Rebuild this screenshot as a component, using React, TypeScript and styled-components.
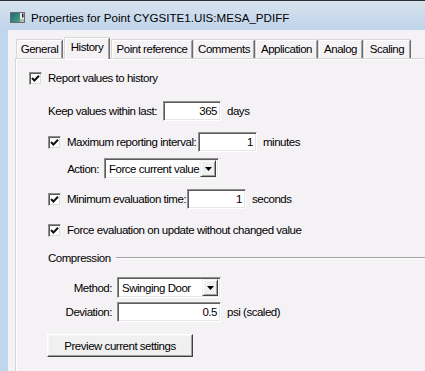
import React from "react";
import styled, { createGlobalStyle } from "styled-components";

const UI = `"Liberation Sans", Arial, sans-serif`;

const Global = createGlobalStyle`
  html, body { margin: 0; padding: 0; background: #f5f2f5; }
  body { width: 425px; height: 371px; overflow: hidden; }
  * { box-sizing: border-box; }
`;

const Window = styled.div`
  width: 425px;
  height: 371px;
  display: flex;
  flex-direction: column;
  background: #f5f2f5;
  border-top: 1px solid #2b3038;
  overflow: hidden;
  font-family: ${UI};
  font-size: 11.5px;
  letter-spacing: -0.47px;
  color: #000;
`;

const TitleBar = styled.div`
  height: 29px;
  flex: none;
  display: flex;
  align-items: center;
  gap: 6px;
  padding: 3px 0 0 10px;
  background: linear-gradient(#d8e2ed, #bfd4eb);
`;

const TitleText = styled.span`
  font-family: "Liberation Sans", Arial, sans-serif;
  font-size: 11.6px;
  letter-spacing: 0;
  color: #000;
  white-space: nowrap;
`;

const Body = styled.div`
  flex: 1;
  display: flex;
  min-height: 0;
`;

const Frame = styled.div`
  width: 8px;
  flex: none;
  background: #bfd6ef;
`;

const Client = styled.div`
  flex: 1;
  display: flex;
  flex-direction: column;
  padding: 7px 0 0 7px;
  min-width: 0;
`;

const TabRow = styled.div`
  height: 21px;
  display: flex;
  align-items: flex-end;
  padding-left: 1px;
  position: relative;
  z-index: 1;
`;

const Tab = styled.div<{ $w: number; $active?: boolean }>`
  width: ${(p) => p.$w}px;
  height: ${(p) => (p.$active ? 22 : 19)}px;
  margin: ${(p) => (p.$active ? "0 1px -1px 1px" : "0")};
  display: flex;
  align-items: center;
  justify-content: center;
  padding-bottom: ${(p) => (p.$active ? 3 : 1)}px;
  background: #f5f2f5;
  border-top: 1px solid #d6d6d6;
  border-left: 1px solid #d6d6d6;
  border-right: 1px solid #6d6d6d;
  border-top-left-radius: 2px;
  border-top-right-radius: 2px;
  box-shadow: inset 1px 1px 0 #ffffff, inset -1px 0 0 #a3a3a3;
  white-space: nowrap;
`;

const Panel = styled.div`
  flex: 1;
  background: #f5f2f5;
  border-top: 1px solid #d6d6d6;
  border-left: 1px solid #d6d6d6;
  box-shadow: inset 1px 1px 0 #ffffff;
  padding-left: 13px;
  display: flex;
  flex-direction: column;
`;

const Row = styled.div<{ $mt: number; $indent?: number }>`
  display: flex;
  align-items: center;
  min-height: 20px;
  margin-top: ${(p) => p.$mt}px;
  padding-left: ${(p) => p.$indent ?? 0}px;
  white-space: nowrap;
`;

const Box = styled.span`
  width: 13px;
  height: 13px;
  flex: none;
  display: inline-flex;
  align-items: center;
  justify-content: center;
  background: #fff;
  border: 1px solid;
  border-color: #8d8d8d #f4f4f4 #f4f4f4 #8d8d8d;
  box-shadow: inset 1px 1px 0 #5a5a5a, inset -1px -1px 0 #dcdcdc;
  margin-right: 6px;
`;

const Label = styled.span<{ $w?: number; $right?: boolean }>`
  display: inline-block;
  width: ${(p) => (p.$w ? `${p.$w}px` : "auto")};
  flex: none;
  text-align: ${(p) => (p.$right ? "right" : "left")};
  padding-right: ${(p) => (p.$right ? 5 : 0)}px;
`;

const Field = styled.div<{ $w: number }>`
  width: ${(p) => p.$w}px;
  height: 20px;
  flex: none;
  display: flex;
  align-items: center;
  justify-content: flex-end;
  padding-right: 3px;
  background: #fff;
  border: 1px solid;
  border-color: #8f8f8f #ffffff #ffffff #8f8f8f;
  box-shadow: inset 1px 1px 0 #5a5a5a, inset -1px -1px 0 #e6e6e6;
`;

const Unit = styled.span`
  margin-left: 6px;
`;

const Combo = styled.div<{ $w: number }>`
  width: ${(p) => p.$w}px;
  height: 21px;
  flex: none;
  display: flex;
  align-items: center;
  padding: 2px;
  background: #fff;
  border: 1px solid;
  border-color: #8f8f8f #ffffff #ffffff #8f8f8f;
  box-shadow: inset 1px 1px 0 #5a5a5a, inset -1px -1px 0 #e6e6e6;
`;

const ComboText = styled.span`
  flex: 1;
  padding-left: 2px;
  overflow: hidden;
`;

const ComboButton = styled.span`
  width: 16px;
  height: 17px;
  flex: none;
  display: flex;
  align-items: center;
  justify-content: center;
  background: #f0f0f0;
  border: 1px solid;
  border-color: #f0f0f0 #404040 #404040 #f0f0f0;
  box-shadow: inset 1px 1px 0 #ffffff, inset -1px -1px 0 #a0a0a0;
`;

const GroupLine = styled.span`
  flex: 1;
  height: 2px;
  margin-left: 5px;
  border-top: 1px solid #a0a0a0;
  border-bottom: 1px solid #ffffff;
`;

const Button = styled.div`
  width: 146px;
  height: 23px;
  display: flex;
  align-items: center;
  justify-content: center;
  background: #f0f0f0;
  border: 1px solid;
  border-color: #ffffff #404040 #404040 #ffffff;
  box-shadow: inset -1px -1px 0 #a0a0a0, inset 1px 1px 0 #f8f8f8;
`;

const Check = () => (
  <svg width="9" height="9" viewBox="0 0 9 9">
    <polyline points="1,4 3.4,6.5 8,1.8" fill="none" stroke="#111" strokeWidth="2" />
  </svg>
);

const Arrow = () => (
  <svg width="7" height="4" viewBox="0 0 7 4">
    <polygon points="0,0 7,0 3.5,4" fill="#000" />
  </svg>
);

const AppIcon = () => (
  <svg width="15" height="11" viewBox="0 0 15 11">
    <defs>
      <linearGradient id="ig" x1="0" y1="0" x2="1" y2="1">
        <stop offset="0" stopColor="#1d6486" />
        <stop offset="1" stopColor="#49a874" />
      </linearGradient>
    </defs>
    <rect x="0.5" y="0.5" width="14" height="10" fill="#e8e8e8" stroke="#6b6b6b" />
    <rect x="1" y="1" width="9" height="9" fill="url(#ig)" />
    <rect x="10" y="7" width="4" height="3" fill="#b8b8b8" />
    <rect x="12" y="1.5" width="1.5" height="4" fill="#222" />
  </svg>
);

const tabs: { name: string; w: number }[] = [
  { name: "General", w: 47 },
  { name: "History", w: 46 },
  { name: "Point reference", w: 82 },
  { name: "Comments", w: 62 },
  { name: "Application", w: 63 },
  { name: "Analog", w: 45 },
  { name: "Scaling", w: 48 },
];

export default function App() {
  return (
    <>
      <Global />
      <Window>
        <TitleBar>
          <AppIcon />
          <TitleText>Properties for Point CYGSITE1.UIS:MESA_PDIFF</TitleText>
        </TitleBar>
        <Body>
          <Frame />
          <Client>
            <TabRow>
              {tabs.map((t) => (
                <Tab key={t.name} $w={t.w} $active={t.name === "History"}>
                  {t.name}
                </Tab>
              ))}
            </TabRow>
            <Panel>
              <Row $mt={9}>
                <Box><Check /></Box>
                Report values to history
              </Row>
              <Row $mt={13} $indent={19}>
                <Label $w={115}>Keep values within last:</Label>
                <Field $w={58}>365</Field>
                <Unit>days</Unit>
              </Row>
              <Row $mt={11} $indent={19}>
                <Box><Check /></Box>
                <Label $w={131}>Maximum reporting interval:</Label>
                <Field $w={59}>1</Field>
                <Unit>minutes</Unit>
              </Row>
              <Row $mt={6} $indent={19}>
                <Label $w={56} $right>Action:</Label>
                <Combo $w={115}>
                  <ComboText>Force current value</ComboText>
                  <ComboButton><Arrow /></ComboButton>
                </Combo>
              </Row>
              <Row $mt={10} $indent={19}>
                <Box><Check /></Box>
                <Label $w={120}>Minimum evaluation time:</Label>
                <Field $w={59}>1</Field>
                <Unit>seconds</Unit>
              </Row>
              <Row $mt={11} $indent={19}>
                <Box><Check /></Box>
                Force evaluation on update without changed value
              </Row>
              <Row $mt={8} $indent={19}>
                <Label>Compression</Label>
                <GroupLine />
              </Row>
              <Row $mt={9} $indent={19}>
                <Label $w={69} $right>Method:</Label>
                <Combo $w={104}>
                  <ComboText>Swinging Door</ComboText>
                  <ComboButton><Arrow /></ComboButton>
                </Combo>
              </Row>
              <Row $mt={4} $indent={19}>
                <Label $w={69} $right>Deviation:</Label>
                <Field $w={104}>0.5</Field>
                <Unit>psi (scaled)</Unit>
              </Row>
              <Row $mt={12} $indent={18}>
                <Button>Preview current settings</Button>
              </Row>
            </Panel>
          </Client>
        </Body>
      </Window>
    </>
  );
}
